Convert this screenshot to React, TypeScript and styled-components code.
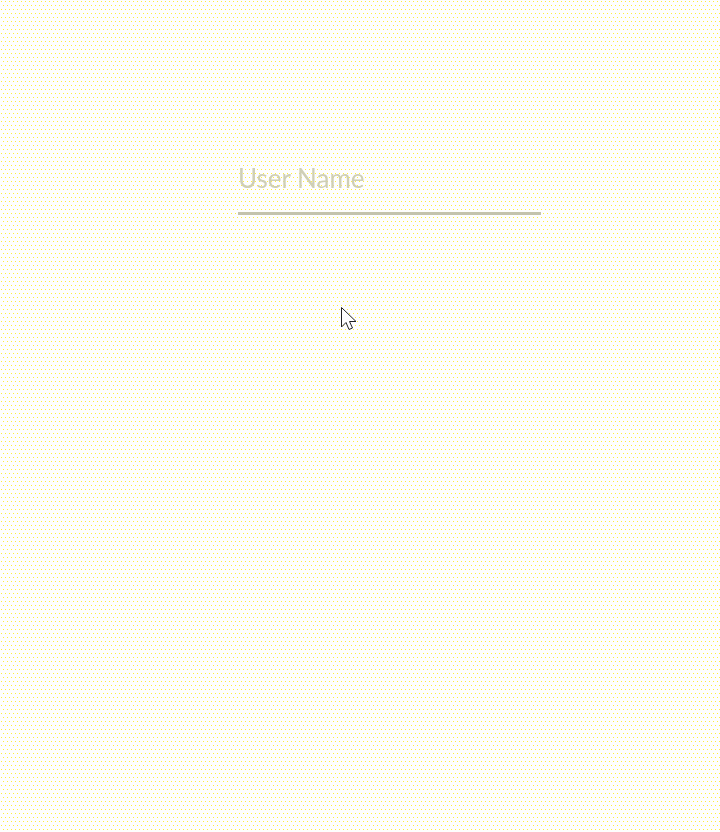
import React from "react";
import styled, { createGlobalStyle } from "styled-components";

const Global = createGlobalStyle`
  html {
    background-color: #fefefe;
  }
  html, body {
    margin: 0;
    padding: 0;
    min-height: 832px;
  }
  body::before, body::after {
    content: "";
    position: fixed;
    inset: 0;
    z-index: -1;
    pointer-events: none;
    background-image: repeating-linear-gradient(to right, #ffee3c 0 1px, transparent 1px 4px);
    -webkit-mask-image: repeating-linear-gradient(to bottom, #000 0 1px, transparent 1px 8px);
    mask-image: repeating-linear-gradient(to bottom, #000 0 1px, transparent 1px 8px);
  }
  body::before {
    background-position: 1px 0;
    -webkit-mask-position: 0 1px;
    mask-position: 0 1px;
  }
  body::after {
    background-position: 3px 0;
    -webkit-mask-position: 0 5px;
    mask-position: 0 5px;
  }
`;

const Page = styled.div`
  position: relative;
  min-height: 832px;
  padding: 158px 0 0 238px;
  box-sizing: border-box;
  font-family: Lato, "Open Sans", sans-serif;
`;

const Field = styled.div`
  width: 303px;
  display: flex;
  flex-direction: column;
`;

const Input = styled.input`
  width: 100%;
  box-sizing: border-box;
  border: none;
  border-bottom: 3px solid #c4c3ae;
  background: transparent;
  font-family: Lato, "Open Sans", sans-serif;
  font-size: 26px;
  font-weight: 400;
  line-height: 31px;
  height: 57px;
  color: #555;
  padding: 4px 0 19px 0;
  outline: none;
  &::placeholder {
    color: #cfcfb6;
  }
`;

const Cursor = styled.svg`
  position: absolute;
  left: 340px;
  top: 306px;
`;

export default function App() {
  return (
    <>
      <Global />
      <Page>
        <Field>
          <Input placeholder="User Name" />
        </Field>
        <Cursor width="20" height="28" viewBox="0 0 20 28">
          <path
            d="M1.5 1.5 L1.5 21 L6 16.5 L9 23.5 L12.5 22 L9.5 15.5 L16 15.5 Z"
            fill="#ffffff"
            stroke="#222"
            strokeWidth="1"
            strokeLinejoin="miter"
          />
        </Cursor>
      </Page>
    </>
  );
}
